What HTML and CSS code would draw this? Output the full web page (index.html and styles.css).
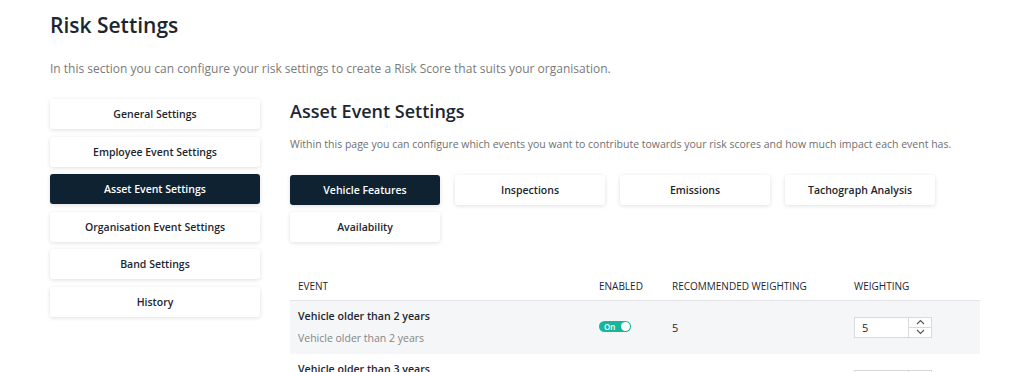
FILE: index.html
```html
<!DOCTYPE html>
<html lang="en">
<head>
    <meta charset="UTF-8">
    <meta name="viewport" content="width=device-width, initial-scale=1.0">
    <title>Risk Settings</title>
    <link rel="stylesheet" href="styles.css">
</head>
<body>
    <div class="page">
        <h1>Risk Settings</h1>
        <p class="intro">In this section you can configure your risk settings to create a Risk Score that suits your organisation.</p>

        <div class="layout">
            <nav class="side-nav">
                <a class="nav-item">General Settings</a>
                <a class="nav-item">Employee Event Settings</a>
                <a class="nav-item active">Asset Event Settings</a>
                <a class="nav-item">Organisation Event Settings</a>
                <a class="nav-item">Band Settings</a>
                <a class="nav-item">History</a>
            </nav>

            <main class="content">
                <h2>Asset Event Settings</h2>
                <p class="lead">Within this page you can configure which events you want to contribute towards your risk scores and how much impact each event has.</p>

                <div class="tabs">
                    <a class="tab active">Vehicle Features</a>
                    <a class="tab">Inspections</a>
                    <a class="tab">Emissions</a>
                    <a class="tab">Tachograph Analysis</a>
                    <a class="tab">Availability</a>
                </div>

                <table class="events">
                    <thead>
                        <tr>
                            <th class="col-event">Event</th>
                            <th class="col-enabled">Enabled</th>
                            <th class="col-rec">Recommended Weighting</th>
                            <th class="col-weight">Weighting</th>
                        </tr>
                    </thead>
                    <tbody>
                        <tr class="shaded">
                            <td>
                                <div class="event-name">Vehicle older than 2 years</div>
                                <div class="event-desc">Vehicle older than 2 years</div>
                            </td>
                            <td><span class="toggle"><span class="toggle-label">On</span><span class="knob"></span></span></td>
                            <td class="rec">5</td>
                            <td>
                                <div class="number">
                                    <span class="number-value">5</span>
                                    <span class="spin">
                                        <span class="spin-btn"><svg width="9" height="6" viewBox="0 0 9 6"><path d="M1 5 L4.5 1.5 L8 5" fill="none" stroke="#555" stroke-width="1.1"/></svg></span>
                                        <span class="spin-btn"><svg width="9" height="6" viewBox="0 0 9 6"><path d="M1 1 L4.5 4.5 L8 1" fill="none" stroke="#555" stroke-width="1.1"/></svg></span>
                                    </span>
                                </div>
                            </td>
                        </tr>
                        <tr>
                            <td>
                                <div class="event-name">Vehicle older than 3 years</div>
                                <div class="event-desc">Vehicle older than 3 years</div>
                            </td>
                            <td><span class="toggle"><span class="toggle-label">On</span><span class="knob"></span></span></td>
                            <td class="rec">5</td>
                            <td>
                                <div class="number">
                                    <span class="number-value">5</span>
                                    <span class="spin">
                                        <span class="spin-btn"></span>
                                        <span class="spin-btn"></span>
                                    </span>
                                </div>
                            </td>
                        </tr>
                    </tbody>
                </table>
            </main>
        </div>
    </div>
</body>
</html>
```

FILE: styles.css
```css
body {
    font-family: "Open Sans", "Noto Sans", Arial, sans-serif;
    margin: 0;
    color: #1d2630;
    background: #fff;
}
.page {
    padding: 0 43px 0 50px;
}
h1 {
    font-size: 21px;
    font-weight: 600;
    line-height: 30px;
    margin: 10px 0 0;
}
.intro {
    font-size: 12px;
    line-height: 18px;
    color: #7a7a7a;
    margin: 20px 0 0;
}
.layout {
    display: flex;
    gap: 30px;
    margin-top: 21px;
}
.side-nav {
    width: 210px;
    flex: none;
    display: flex;
    flex-direction: column;
    gap: 7.5px;
}
.nav-item,
.tab {
    display: flex;
    align-items: center;
    justify-content: center;
    height: 30px;
    background: #fff;
    border-radius: 3px;
    box-shadow: 0 1px 4px rgba(0, 0, 0, 0.13);
    font-size: 10.5px;
    font-weight: 600;
    color: #1d2630;
}
.nav-item.active,
.tab.active {
    background: #0f2232;
    color: #fff;
}
.content {
    flex: 1;
}
h2 {
    font-size: 18px;
    font-weight: 600;
    line-height: 24px;
    margin: 0;
}
.lead {
    font-size: 10.5px;
    line-height: 16px;
    color: #6f6f6f;
    margin: 13px 0 0;
}
.tabs {
    display: grid;
    grid-template-columns: repeat(4, 150px);
    gap: 7px 15px;
    margin-top: 23px;
}
.events {
    width: 100%;
    border-collapse: collapse;
    margin-top: 29px;
    table-layout: fixed;
}
.events th {
    text-align: left;
    font-size: 10px;
    font-weight: 500;
    text-transform: uppercase;
    line-height: 14px;
    padding: 8px 8px 7px;
    border-bottom: 1px solid #e1e3e6;
    color: #1d2630;
}
.col-event { width: 285px; }
.col-enabled { width: 57px; }
.col-rec { width: 166px; }
.events td {
    padding: 7px 8px 8px;
    vertical-align: middle;
    font-size: 11px;
}
.events tr.shaded td {
    background: #f5f6f8;
}
.event-name {
    font-size: 10.6px;
    font-weight: 600;
    line-height: 16px;
}
.event-desc {
    font-size: 10.5px;
    line-height: 16px;
    color: #858585;
    margin-top: 6px;
}
.toggle {
    display: inline-flex;
    align-items: center;
    justify-content: space-between;
    width: 32px;
    height: 11px;
    border-radius: 6px;
    background: #17b59c;
    padding: 0 1px 0 5px;
    box-sizing: border-box;
    position: relative;
    top: -2px;
}
.toggle-label {
    color: #fff;
    font-size: 8px;
    font-weight: 600;
    line-height: 11px;
}
.knob {
    width: 9px;
    height: 9px;
    border-radius: 50%;
    background: #fff;
}
.rec {
    font-size: 11px;
}
.number {
    display: flex;
    width: 78px;
    height: 21px;
    border: 1px solid #d7d9dc;
    box-sizing: border-box;
    background: #fff;
}
.number-value {
    flex: 1;
    font-size: 11px;
    line-height: 19px;
    padding-left: 7px;
}
.spin {
    width: 22px;
    display: flex;
    flex-direction: column;
    border-left: 1px solid #d7d9dc;
}
.spin-btn {
    flex: 1;
    display: flex;
    align-items: center;
    justify-content: center;
}
.spin-btn + .spin-btn {
    border-top: 1px solid #d7d9dc;
}
```
